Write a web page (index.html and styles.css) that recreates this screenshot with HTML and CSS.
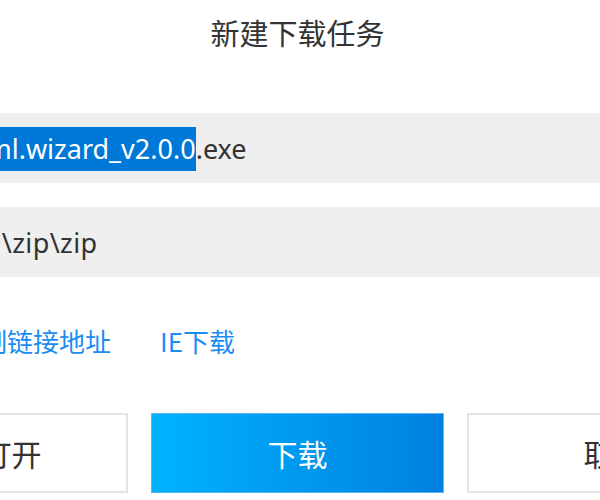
FILE: index.html
```html
<!DOCTYPE html>
<html lang="zh-CN">
<head>
    <meta charset="UTF-8">
    <title>新建下载任务</title>
    <link rel="stylesheet" href="styles.css">
</head>
<body>

    <div class="dialog">
        <h1 class="title">新建下载任务</h1>

        <div class="field name">
            <span class="value"><span class="selected">html.wizard_v2.0.0</span>.exe</span>
        </div>
        <div class="field path">
            <span class="value">D:\zip\zip</span>
        </div>

        <div class="links">
            <a href="#" class="link">复制链接地址</a>
            <a href="#" class="link">IE下载</a>
        </div>

        <div class="actions">
            <button class="btn">直接打开</button>
            <button class="btn primary">下载</button>
            <button class="btn">取消</button>
        </div>
    </div>

</body>
</html>
```

FILE: styles.css
```css
body {
    margin: 0;
    background-color: #ffffff;
    color: #333333;
    font-family: "Noto Sans", "Noto Sans CJK SC", sans-serif;
    overflow: hidden;
}

/* the dialog is wider than the window, only its middle is visible */
.dialog {
    width: 925px;
    margin-left: -165px;
}

.title {
    margin: 0;
    padding-top: 14px;
    font-size: 29px;
    font-weight: normal;
    line-height: 40px;
    text-align: center;
    color: #333333;
}

.field {
    height: 70px;
    margin-top: 24px;
    background-color: #efefef;
    display: flex;
    align-items: center;
    font-size: 27px;
    white-space: nowrap;
}

.field.name {
    margin-top: 59px;
    padding-left: 125px;
}

.field.path {
    padding-left: 139px;
    letter-spacing: 0.4px;
}

.selected {
    background-color: #0078d7;
    color: #ffffff;
    padding: 3px 0 4px;
}

.links {
    margin-top: 46px;
    padding-left: 120px;
    display: flex;
    gap: 49px;
    line-height: 36px;
}

.link {
    font-size: 26px;
    color: #1b8cf2;
    text-decoration: none;
    font-family: "Noto Sans CJK SC", sans-serif;
}

.actions {
    margin-top: 54px;
    display: grid;
    grid-template-columns: repeat(3, 1fr);
    gap: 23px;
}

.btn {
    height: 80px;
    border: 2px solid #e4e4e4;
    background-color: #ffffff;
    color: #333333;
    font-family: "Noto Sans CJK SC", sans-serif;
    font-size: 30px;
    cursor: pointer;
}

.btn.primary {
    border: 1px solid #5ab8f5;
    background: linear-gradient(to right, #00b2ff, #0080e0);
    color: #ffffff;
}
```
